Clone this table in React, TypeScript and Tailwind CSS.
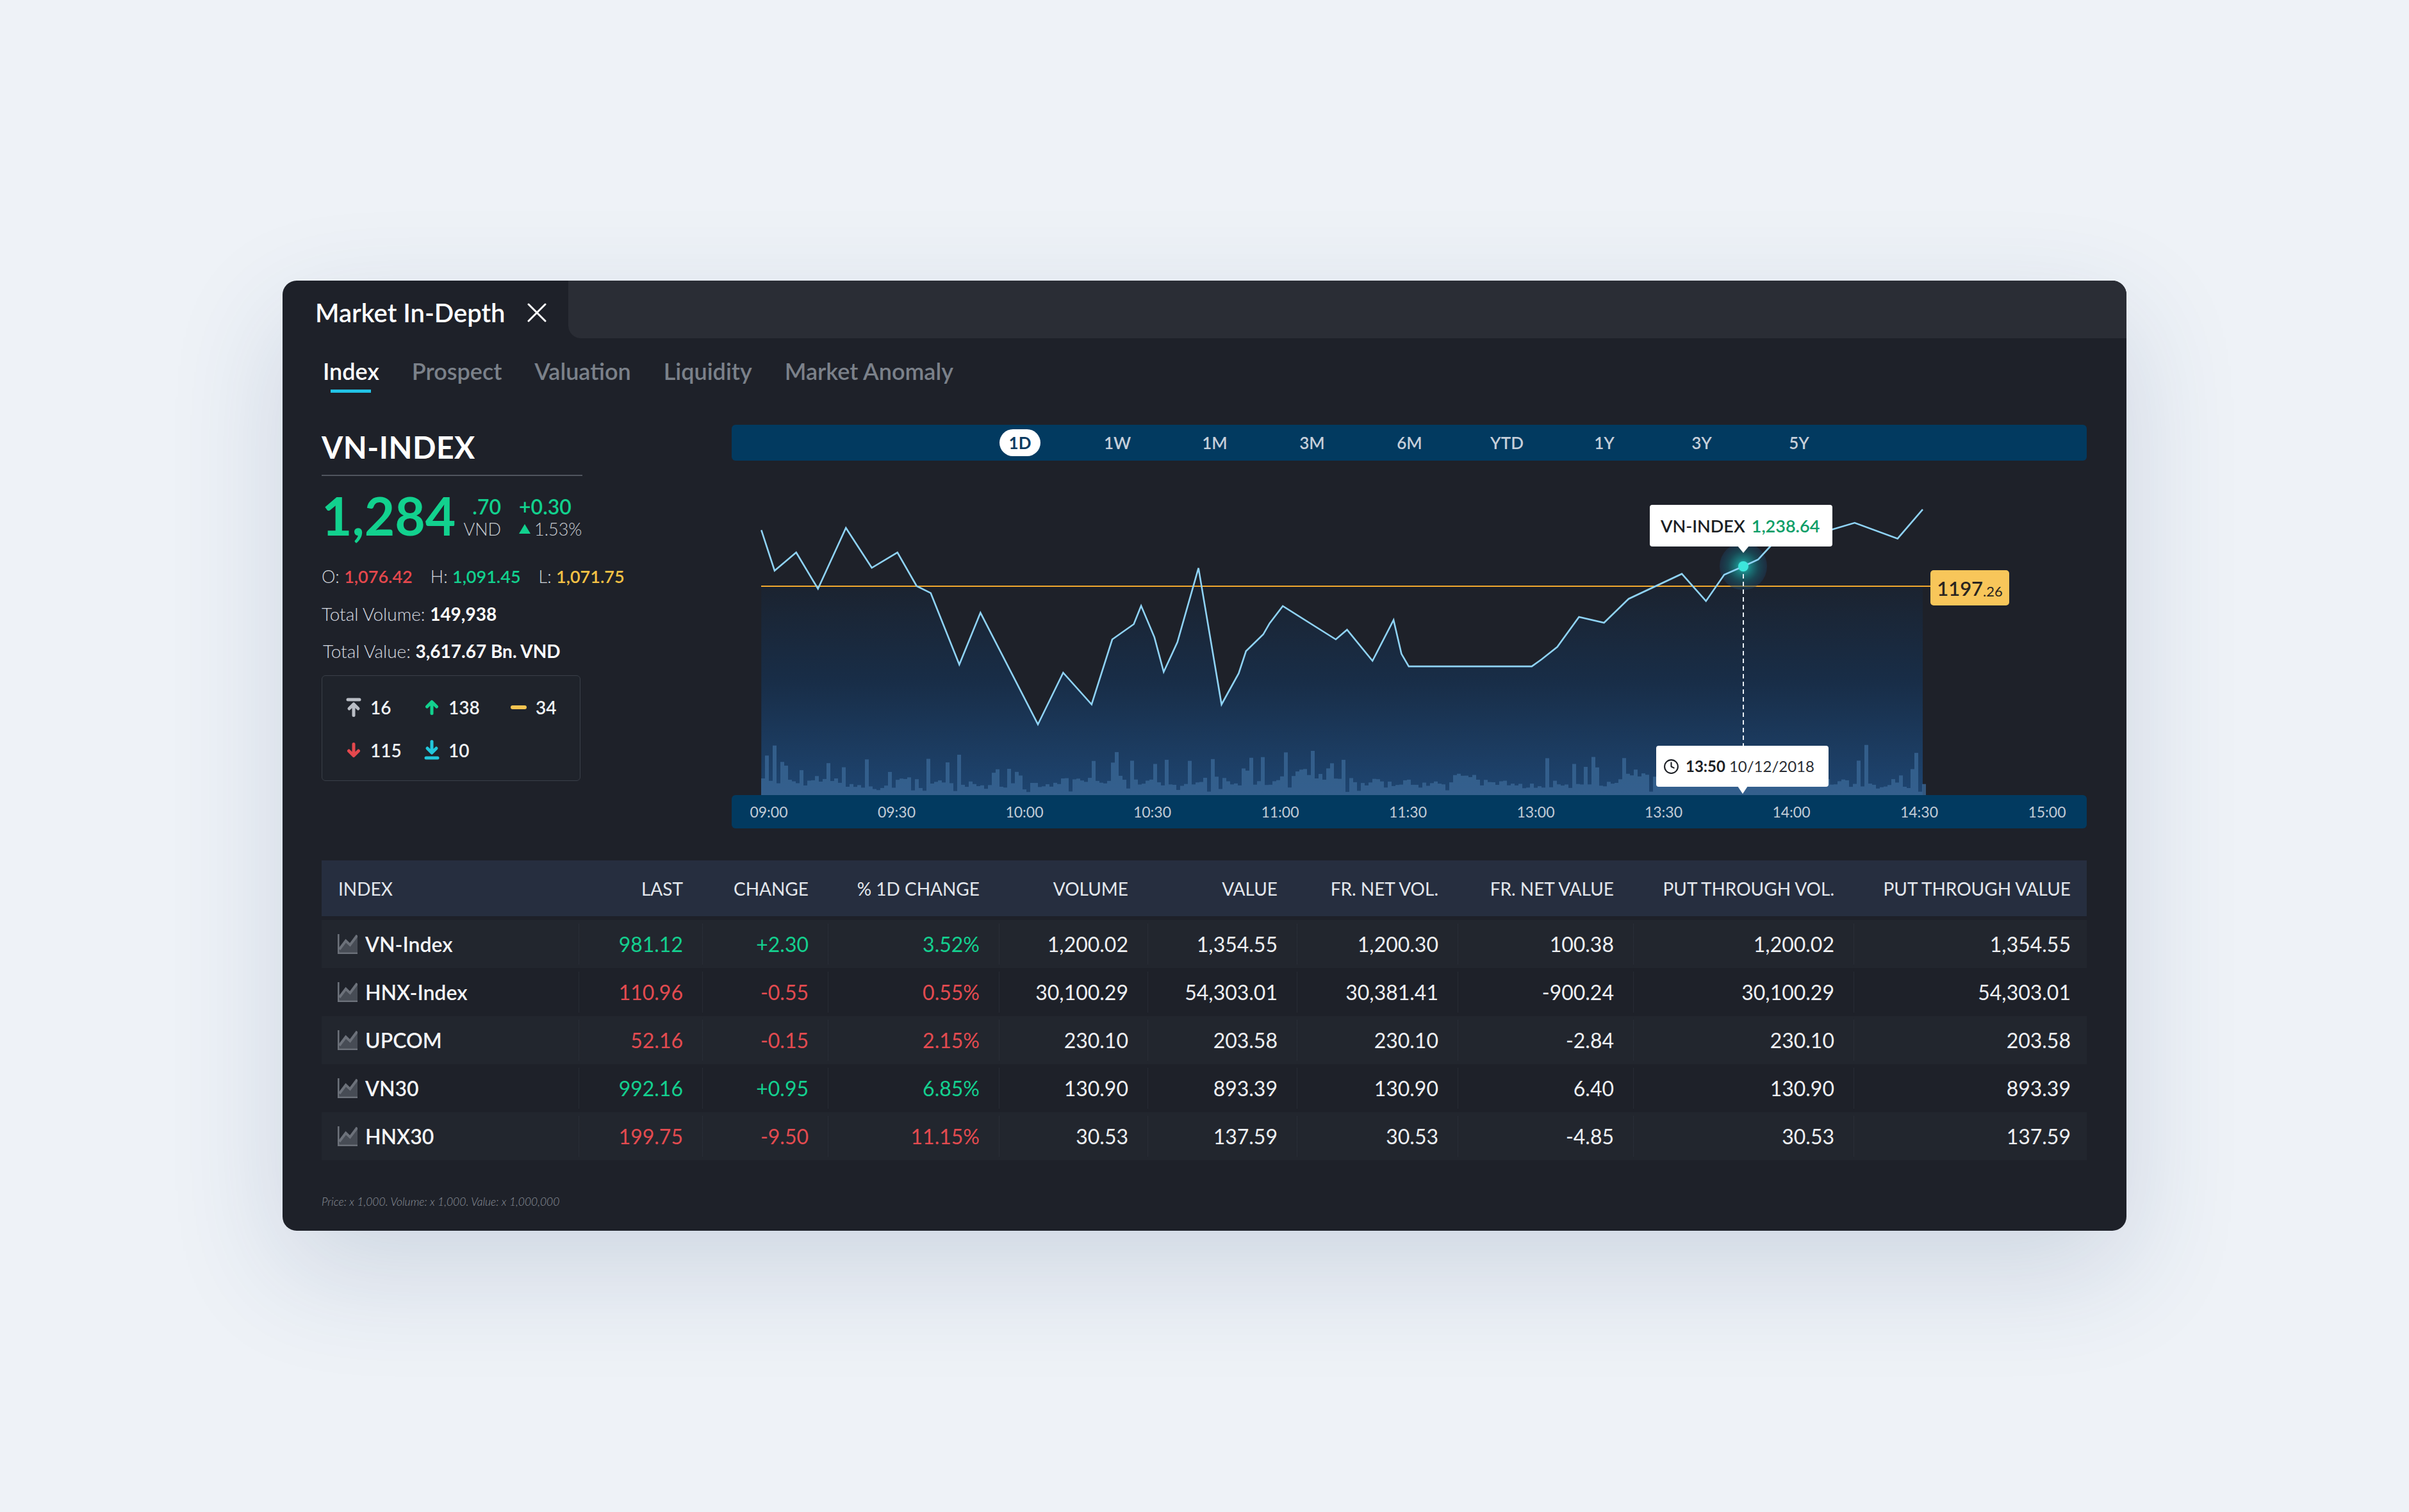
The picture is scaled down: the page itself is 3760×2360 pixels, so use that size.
import React from "react";
import { Clock } from "lucide-react";

const COLS =
  "grid grid-cols-[401px_193px_196px_267px_232px_233px_251px_274px_344px_364px]";

const LINE: [number, number][] = [
  [46.3, 108.3], [67, 171.7], [100.7, 143.3], [134.7, 200], [178.3, 105],
  [218.7, 167.3], [258.7, 143.3], [288.7, 195.7], [310.7, 206.7], [355.3, 318.3],
  [388.3, 237.3], [478, 411.7], [517.4, 331], [561.8, 380.5], [594, 279],
  [627.6, 255.2], [639.1, 226.6], [659.8, 275.6], [674.3, 329.8], [695.7, 283.4],
  [728.6, 167.6], [764.6, 380.5], [791.4, 332], [802.8, 297.3], [829.6, 271.3],
  [839.6, 253.9], [860.2, 227], [942.9, 279], [960.5, 263.9], [1000.2, 312.5],
  [1033.1, 248.7], [1045.4, 301.6], [1056.8, 321.1], [1248.8, 321.1], [1264, 310.3],
  [1288.6, 290.8], [1322.5, 243.9], [1361.6, 253], [1400, 215.7], [1483, 176.7],
  [1520.7, 219.2], [1549.2, 178], [1579, 165], [1602.3, 154.2], [1622.2, 132.5],
  [1718.3, 107.3], [1752.8, 97], [1819.8, 121.6], [1859, 76.1],
];

const linePath = LINE.map((p, i) => `${i ? "L" : "M"}${p[0]},${p[1]}`).join(" ");
const areaPath = `${linePath} L1859,522 L46.3,522 Z`;

function makeBars() {
  let s = 98765;
  const rnd = () => {
    s = (s * 16807) % 2147483647;
    return s / 2147483647;
  };
  const bars: { x: number; h: number }[] = [];
  let base = 20;
  for (let x = 46; x < 1859; x += 6) {
    base += (rnd() - 0.5) * 10;
    if (base < 8) base = 8;
    if (base > 34) base = 34;
    let h = base + rnd() * 10;
    if (rnd() < 0.14) h += 14 + rnd() * 30;
    if (rnd() < 0.04) h += 25;
    if (rnd() < 0.08) h = 4 + rnd() * 8;
    bars.push({ x, h });
  }
  return bars;
}
const BARS = makeBars();

const PERIODS = ["1D", "1W", "1M", "3M", "6M", "YTD", "1Y", "3Y", "5Y"];
const TIMES = ["09:00", "09:30", "10:00", "10:30", "11:00", "11:30", "13:00", "13:30", "14:00", "14:30", "15:00"];
const HEADERS = ["LAST", "CHANGE", "% 1D CHANGE", "VOLUME", "VALUE", "FR. NET VOL.", "FR. NET VALUE", "PUT THROUGH VOL."];

const ROWS = [
  { name: "VN-Index", last: "981.12", ch: "+2.30", pct: "3.52%", up: true, vals: ["1,200.02", "1,354.55", "1,200.30", "100.38", "1,200.02", "1,354.55"] },
  { name: "HNX-Index", last: "110.96", ch: "-0.55", pct: "0.55%", up: false, vals: ["30,100.29", "54,303.01", "30,381.41", "-900.24", "30,100.29", "54,303.01"] },
  { name: "UPCOM", last: "52.16", ch: "-0.15", pct: "2.15%", up: false, vals: ["230.10", "203.58", "230.10", "-2.84", "230.10", "203.58"] },
  { name: "VN30", last: "992.16", ch: "+0.95", pct: "6.85%", up: true, vals: ["130.90", "893.39", "130.90", "6.40", "130.90", "893.39"] },
  { name: "HNX30", last: "199.75", ch: "-9.50", pct: "11.15%", up: false, vals: ["30.53", "137.59", "30.53", "-4.85", "30.53", "137.59"] },
];

function IndexIcon() {
  return (
    <svg width="31" height="31" viewBox="0 0 31 31" className="shrink-0">
      <path d="M2.5 28.5 L2.5 26 L12.7 13 L19.3 20 L31 4 L31 28.5 Z" fill="#474c55" />
      <path d="M2.5 24 L12.7 10.5 L19.3 17 L30.5 2" fill="none" stroke="#6c717a" strokeWidth="4" />
      <rect x="0" y="0" width="2.6" height="31" fill="#6c717a" />
      <rect x="0" y="28.4" width="31" height="2.6" fill="#6c717a" />
    </svg>
  );
}

function StatIcon({ kind }: { kind: string }) {
  const common = { fill: "none", strokeWidth: 5, strokeLinecap: "round" as const, strokeLinejoin: "round" as const };
  if (kind === "ceil")
    return (
      <svg width="24" height="30" viewBox="0 0 24 30">
        <path d="M3 3 H21" stroke="#b9bdc5" {...common} />
        <path d="M12 27.5 V11 M5 17 L12 10 L19 17" stroke="#b9bdc5" {...common} />
      </svg>
    );
  if (kind === "up")
    return (
      <svg width="24" height="24" viewBox="0 0 24 24">
        <path d="M12 21.5 V4 M4.5 11 L12 3.5 L19.5 11" stroke="#12d18e" {...common} />
      </svg>
    );
  if (kind === "down")
    return (
      <svg width="24" height="24" viewBox="0 0 24 24">
        <path d="M12 2.5 V20 M4.5 13 L12 20.5 L19.5 13" stroke="#e5484d" {...common} />
      </svg>
    );
  if (kind === "floor")
    return (
      <svg width="24" height="31" viewBox="0 0 24 31">
        <path d="M12 2.5 V19 M5 13 L12 20 L19 13" stroke="#22c8dc" {...common} />
        <path d="M3 28 H21" stroke="#22c8dc" {...common} />
      </svg>
    );
  return <div className="h-[6px] w-[25px] rounded-full bg-[#f6c451]" />;
}

function Stat({ kind, value }: { kind: string; value: string }) {
  return (
    <div className="flex items-center gap-[14px]">
      <div className="flex w-[25px] justify-center">
        <StatIcon kind={kind} />
      </div>
      <span className="text-[28px] leading-none font-semibold text-[#f1f3f6]">{value}</span>
    </div>
  );
}

function LeftInfo() {
  return (
    <div className="flex w-[407px] shrink-0 flex-col">
      <div className="mt-[11px] text-[48px] leading-none font-bold tracking-[0.5px] text-white">VN-INDEX</div>
      <div className="mt-[19px] h-[2px] w-[407px] bg-[#50555e]" />
      <div className="mt-[20px] flex items-start">
        <span className="text-[82px] leading-none font-bold text-[#12d18e]">1,284</span>
        <div className="ml-[12px] mt-[12px] flex flex-col items-end">
          <span className="text-[32px] leading-none font-semibold text-[#12d18e]">.70</span>
          <span className="mt-[5px] text-[27px] leading-none font-light text-[#c9cdd3]">VND</span>
        </div>
        <div className="ml-[28px] mt-[12px] flex flex-col">
          <span className="text-[32px] leading-none font-semibold text-[#12d18e]">+0.30</span>
          <span className="mt-[5px] flex items-center gap-[6px] text-[27px] leading-none font-light text-[#c9cdd3]">
            <span className="h-0 w-0 border-x-[9px] border-b-[15px] border-x-transparent border-b-[#12d18e]" />
            1.53%
          </span>
        </div>
      </div>
      <div className="mt-[41px] flex items-center text-[27px] leading-none">
        <span className="font-light text-[#d3d7dd]">O:&nbsp;</span>
        <span className="font-semibold text-[#e5484d]">1,076.42</span>
        <span className="ml-[28px] font-light text-[#d3d7dd]">H:&nbsp;</span>
        <span className="font-semibold text-[#12d18e]">1,091.45</span>
        <span className="ml-[28px] font-light text-[#d3d7dd]">L:&nbsp;</span>
        <span className="font-semibold text-[#f6c245]">1,071.75</span>
      </div>
      <div className="mt-[31px] text-[28px] leading-none">
        <span className="font-light text-[#d8dce2]">Total Volume: </span>
        <span className="font-bold text-white">149,938</span>
      </div>
      <div className="mt-[30px] pl-[2px] text-[28px] leading-none">
        <span className="font-light text-[#d8dce2]">Total Value: </span>
        <span className="font-bold text-white">3,617.67 Bn. VND</span>
      </div>
      <div className="mt-[24px] h-[165px] w-[404px] rounded-[6px] border border-[#3a3f48] bg-[#1f232b] pl-[36px] pt-[34px]">
        <div className="grid grid-cols-[122px_136px_auto] gap-y-[36px]">
          <Stat kind="ceil" value="16" />
          <Stat kind="up" value="138" />
          <Stat kind="flat" value="34" />
          <Stat kind="down" value="115" />
          <Stat kind="floor" value="10" />
        </div>
      </div>
    </div>
  );
}

function Chart() {
  return (
    <div className="ml-[233px] flex w-[2115px] shrink-0 flex-col">
      <div className="flex h-[56px] items-center rounded-[6px] bg-[#023a60] pl-[374px]">
        {PERIODS.map((p, i) => (
          <div key={p} className="flex w-[152px] justify-center">
            {i === 0 ? (
              <span className="flex h-[42px] w-[64px] items-center justify-center rounded-full bg-white text-[26px] leading-none font-bold text-[#0b3a60]">
                {p}
              </span>
            ) : (
              <span className="text-[26px] leading-none font-semibold text-[#c6cfda]">{p}</span>
            )}
          </div>
        ))}
      </div>
      <div className="relative h-[522px] w-[2115px]">
        <svg width="2115" height="522" viewBox="0 0 2115 522" className="block">
          <defs>
            <linearGradient id="fillg" x1="0" y1="196" x2="0" y2="522" gradientUnits="userSpaceOnUse">
              <stop offset="0" stopColor="#1b2330" />
              <stop offset="0.45" stopColor="#182d47" />
              <stop offset="1" stopColor="#1e4571" />
            </linearGradient>
            <clipPath id="below">
              <rect x="0" y="196" width="2115" height="330" />
            </clipPath>
            <radialGradient id="glow">
              <stop offset="0" stopColor="#2ee0d4" stopOpacity="0.9" />
              <stop offset="0.3" stopColor="#1aa3a3" stopOpacity="0.7" />
              <stop offset="0.65" stopColor="#16606f" stopOpacity="0.6" />
              <stop offset="1" stopColor="#1c3c5c" stopOpacity="0.45" />
            </radialGradient>
          </defs>
          <path d={areaPath} fill="url(#fillg)" clipPath="url(#below)" />
          {BARS.map((b) => (
            <rect key={b.x} x={b.x} y={522 - b.h} width="6" height={b.h} fill="#3a6795" opacity="0.8" />
          ))}
          <line x1="46" y1="196" x2="1871" y2="196" stroke="#f2a92e" strokeWidth="2" />
          <circle cx="1579" cy="165" r="37" fill="url(#glow)" />
          <line x1="1579" y1="165" x2="1579" y2="446" stroke="#e8eef5" strokeWidth="2" strokeDasharray="7 5" />
          <path d={linePath} fill="none" stroke="#8fd3f5" strokeWidth="2.6" strokeLinejoin="miter" />
          <circle cx="1579" cy="165" r="8" fill="#3de6dc" />
        </svg>
        <div className="absolute left-[1433px] top-[69px] flex h-[65px] w-[285px] items-center rounded-[4px] bg-white pl-[17px] text-[27px] leading-none font-semibold">
          <span className="text-[#1b1e24]">VN-INDEX</span>
          <span className="ml-[10px] text-[#0c9e68]">1,238.64</span>
          <span className="absolute left-[137px] top-[64px] h-0 w-0 border-x-[9px] border-t-[11px] border-x-transparent border-t-white" />
        </div>
        <div className="absolute left-[1443px] top-[445px] flex h-[64px] w-[269px] items-center rounded-[4px] bg-white pl-[11px] text-[24px] leading-none">
          <Clock size={25} strokeWidth={2} color="#1b1e24" />
          <span className="ml-[10px] font-bold text-[#1b1e24]">13:50</span>
          <span className="ml-[6px] text-[#2a2d33]">10/12/2018</span>
          <span className="absolute left-[127px] top-[63px] h-0 w-0 border-x-[8px] border-t-[12px] border-x-transparent border-t-white" />
        </div>
        <div className="absolute left-[1871px] top-[171px] flex h-[55px] w-[123px] items-end justify-center rounded-[5px] bg-[#f8c65a] pb-[11px] leading-none text-[#2a2520]">
          <span className="text-[31px] font-semibold">1197</span>
          <span className="text-[22px]">.26</span>
        </div>
      </div>
      <div className="flex h-[52px] items-center justify-between rounded-[6px] bg-[#023a60] pl-[26px] pr-[30px]">
        {TIMES.map((t) => (
          <span key={t} className="w-[64px] text-center text-[23px] leading-none text-[#c3ccd7]">
            {t}
          </span>
        ))}
      </div>
    </div>
  );
}

function Table() {
  return (
    <div className="mt-[50px] w-[2755px]">
      <div className={`${COLS} h-[87px] items-center bg-[#262e3f] text-[28px] leading-none text-[#e3e7ec]`}>
        <span className="pl-[26px]">INDEX</span>
        {HEADERS.map((h) => (
          <span key={h} className="pr-[30px] text-right">
            {h}
          </span>
        ))}
        <span className="pr-[25px] text-right">PUT THROUGH VALUE</span>
      </div>
      <div className="mt-[6px] flex flex-col">
        {ROWS.map((r, i) => {
          const c = r.up ? "text-[#14d08f]" : "text-[#e34b50]";
          const cell = "flex items-center justify-end border-l border-dotted border-[#30353f] pr-[30px]";
          const lastCell = "flex items-center justify-end border-l border-dotted border-[#30353f] pr-[25px]";
          return (
            <div key={r.name} className={`${COLS} h-[75px] py-[6px] text-[32px] leading-none ${i % 2 === 0 ? "bg-[#22262e]" : "bg-[#1e2129]"}`}>
              <div className="flex items-center gap-[12px] pl-[25px]">
                <IndexIcon />
                <span className="font-semibold text-[#f4f5f7]">{r.name}</span>
              </div>
              <div className={`${cell} ${c}`}>{r.last}</div>
              <div className={`${cell} ${c}`}>{r.ch}</div>
              <div className={`${cell} ${c}`}>{r.pct}</div>
              {r.vals.map((v, j) => (
                <div key={j} className={`${j === 5 ? lastCell : cell} text-[#eef0f3]`}>
                  {v}
                </div>
              ))}
            </div>
          );
        })}
      </div>
      <div className="mt-[56px] text-[17.5px] leading-none font-light italic text-[#8d929b]">
        Price: x 1,000. Volume: x 1,000. Value: x 1,000,000
      </div>
    </div>
  );
}

export default function App() {
  return (
    <div className="h-[2360px] w-full overflow-hidden bg-[#eef2f7] pt-[438px] font-['Lato','Noto_Sans',sans-serif]">
      <div className="mx-auto flex h-[1483px] w-[2878px] flex-col overflow-hidden rounded-[22px] bg-[#1e2129] shadow-[0_60px_180px_rgba(40,70,120,0.16)]">
        <div className="flex h-[90px] shrink-0">
          <div className="flex w-[446px] items-center pl-[51px] pt-[10px]">
            <span className="text-[40px] leading-none font-semibold text-white">Market In-Depth</span>
            <svg width="30" height="30" viewBox="0 0 30 30" className="ml-[34px]">
              <path d="M2 2 L28 28 M28 2 L2 28" stroke="#ffffff" strokeWidth="3" strokeLinecap="round" />
            </svg>
          </div>
          <div className="flex-1 rounded-bl-[20px] bg-[#2a2d35]" />
        </div>
        <div className="flex flex-col px-[61px]">
          <div className="mt-[33px] flex gap-[51px] pl-[2px] text-[36px] leading-none font-semibold">
            <div className="flex flex-col items-center">
              <span className="text-white">Index</span>
              <span className="mt-[11px] h-[5px] w-[63px] bg-[#22c3e6]" />
            </div>
            <span className="text-[#7b818a]">Prospect</span>
            <span className="text-[#7b818a]">Valuation</span>
            <span className="text-[#7b818a]">Liquidity</span>
            <span className="text-[#7b818a]">Market Anomaly</span>
          </div>
          <div className="mt-[50px] flex">
            <LeftInfo />
            <Chart />
          </div>
          <Table />
        </div>
      </div>
    </div>
  );
}
